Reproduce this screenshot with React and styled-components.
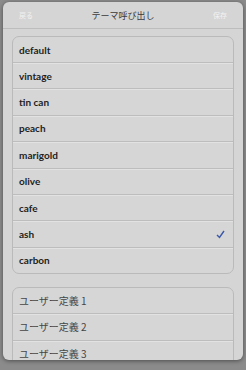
import React from "react";
import styled, { createGlobalStyle } from "styled-components";

const Global = createGlobalStyle`
  html, body { margin: 0; padding: 0; }
  body {
    background: #8b8b8b;
    width: 246px;
    height: 370px;
    overflow: hidden;
    font-family: "Lato", "Noto Sans CJK JP", sans-serif;
  }
`;

const Screen = styled.div`
  width: 246px;
  height: 370px;
  padding: 2px 3px 0;
  box-sizing: border-box;
`;

const Panel = styled.div`
  width: 240px;
  height: 358px;
  background: #d5d5d5;
  border-radius: 6px;
  overflow: hidden;
  box-shadow: 0 1px 4px rgba(0, 0, 0, 0.45);
  display: flex;
  flex-direction: column;
`;

const Header = styled.div`
  height: 26px;
  flex: none;
  display: grid;
  grid-template-columns: 1fr auto 1fr;
  align-items: center;
  padding: 0 16px;
  border-bottom: 1px solid #bdbdbd;
`;

const NavButton = styled.span`
  font-family: "Noto Sans CJK JP", sans-serif;
  font-size: 7px;
  color: #f2f2f2;
  justify-self: ${(p) => (p.$right ? "end" : "start")};
`;

const Title = styled.span`
  font-family: "Noto Sans CJK JP", sans-serif;
  font-size: 9px;
  color: #3a3a3a;
`;

const Body = styled.div`
  flex: 1;
  overflow: hidden;
  padding: 7px 9px 0;
  display: flex;
  flex-direction: column;
  gap: 13px;
`;

const Group = styled.div`
  border: 1px solid #bababa;
  border-radius: 7px;
  background: #d6d6d6;
  flex: none;
`;

const Row = styled.div`
  height: 25px;
  display: flex;
  align-items: center;
  justify-content: space-between;
  padding: 0 8px 0 6px;
  font-size: 10px;
  font-weight: ${(p) => (p.$jp ? 400 : 700)};
  font-family: ${(p) =>
    p.$jp ? '"Noto Sans CJK JP", sans-serif' : '"Lato", sans-serif'};
  color: ${(p) => (p.$jp ? "#454545" : "#1e1e1e")};
  & + & {
    border-top: 1px solid #bdbdbd;
    box-shadow: inset 0 1px 0 #e2e2e2;
    height: 25.4px;
  }
`;

const Check = () => (
  <svg width="9" height="9" viewBox="0 0 9 9">
    <path d="M1 5 L3.5 7.5 L8 1" fill="none" stroke="#3b58a8" strokeWidth="1.4" />
  </svg>
);

const themes = ["default", "vintage", "tin can", "peach", "marigold", "olive", "cafe", "ash", "carbon"];
const users = ["ユーザー定義 1", "ユーザー定義 2", "ユーザー定義 3"];

export default function App() {
  return (
    <>
      <Global />
      <Screen>
        <Panel>
          <Header>
            <NavButton>戻る</NavButton>
            <Title>テーマ呼び出し</Title>
            <NavButton $right>保存</NavButton>
          </Header>
          <Body>
            <Group>
              {themes.map((t) => (
                <Row key={t}>
                  <span>{t}</span>
                  {t === "ash" && <Check />}
                </Row>
              ))}
            </Group>
            <Group>
              {users.map((u) => (
                <Row $jp key={u}>
                  <span>{u}</span>
                </Row>
              ))}
            </Group>
          </Body>
        </Panel>
      </Screen>
    </>
  );
}
